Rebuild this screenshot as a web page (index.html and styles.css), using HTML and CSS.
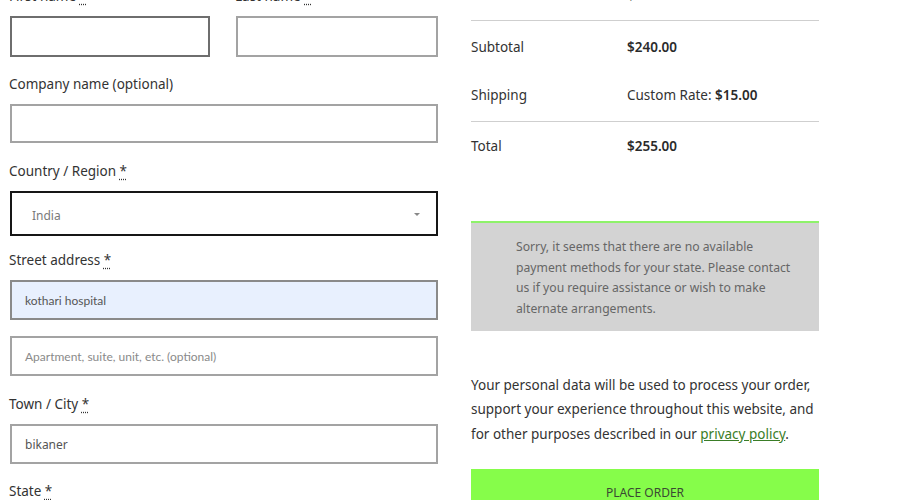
FILE: index.html
```html
<!DOCTYPE html>
<html lang="en">
<head>
<meta charset="utf-8">
<title>Checkout</title>
<link rel="stylesheet" href="styles.css">
</head>
<body>
<div class="page">
  <div class="billing">
    <div class="name-row">
      <div class="field">
        <label class="label">First name <abbr class="req">*</abbr></label>
        <div class="input input-dark"></div>
      </div>
      <div class="field">
        <label class="label">Last name <abbr class="req">*</abbr></label>
        <div class="input input-light"></div>
      </div>
    </div>
    <div class="field field-company">
      <label class="label">Company name (optional)</label>
      <div class="input input-light input-short"></div>
    </div>
    <div class="field field-country">
      <label class="label">Country / Region <abbr class="req">*</abbr></label>
      <div class="select">
        <span class="select-value">India</span>
        <span class="caret"></span>
      </div>
    </div>
    <div class="field field-street">
      <label class="label">Street address <abbr class="req">*</abbr></label>
      <div class="input input-filled"><span class="round-text">kothari hospital</span></div>
    </div>
    <div class="field field-apt">
      <div class="input input-light"><span class="round-text placeholder">Apartment, suite, unit, etc. (optional)</span></div>
    </div>
    <div class="field">
      <label class="label">Town / City <abbr class="req">*</abbr></label>
      <div class="input input-light"><span class="value">bikaner</span></div>
    </div>
    <div class="field">
      <label class="label">State <abbr class="req">*</abbr></label>
    </div>
  </div>

  <div class="review">
    <table class="totals">
      <tr class="row-ruled">
        <td class="cell-label">Product × 1</td>
        <td class="cell-value"><strong>$240.00</strong></td>
      </tr>
      <tr class="row-subtotal">
        <td class="cell-label">Subtotal</td>
        <td class="cell-value"><strong>$240.00</strong></td>
      </tr>
      <tr class="row-ruled row-shipping">
        <td class="cell-label">Shipping</td>
        <td class="cell-value">Custom Rate: <strong>$15.00</strong></td>
      </tr>
      <tr>
        <td class="cell-label">Total</td>
        <td class="cell-value"><strong>$255.00</strong></td>
      </tr>
    </table>

    <div class="notice">Sorry, it seems that there are no available payment methods for your state. Please contact us if you require assistance or wish to make alternate arrangements.</div>

    <p class="privacy">Your personal data will be used to process your order, support your experience throughout this website, and for other purposes described in our <a class="privacy-link" href="#">privacy policy</a>.</p>

    <button class="place-order" type="button">PLACE ORDER</button>
  </div>
</div>
</body>
</html>
```

FILE: styles.css
```css
* { box-sizing: border-box; }

html, body {
  margin: 0;
  padding: 0;
  background: #ffffff;
  overflow: hidden;
}

body {
  font-family: "Noto Sans", "Open Sans", sans-serif;
  color: #333333;
  font-size: 14px;
}

.page {
  display: grid;
  grid-template-columns: 428px 348px;
  column-gap: 33px;
  padding-left: 10px;
  margin-top: -30px;
  align-items: start;
}

/* ---------- left column ---------- */
.billing {
  padding-top: 16px;
}

.name-row {
  display: grid;
  grid-template-columns: 200px 202px;
  column-gap: 26px;
}

.field {
  margin-bottom: 17px;
}

.field-company { margin-bottom: 18px; }
.field-country { margin-bottom: 14px; }
.field-street { margin-bottom: 16px; }
.field-apt { margin-bottom: 18px; }

.label {
  display: block;
  height: 20px;
  line-height: 20px;
  margin-bottom: 10px;
  margin-left: -1px;
  font-size: 13.5px;
  color: #333333;
}

.req {
  text-decoration: underline dotted;
  text-underline-offset: 3px;
  border: none;
  color: #333333;
}

.input {
  height: 40px;
  border: 2px solid #9b9b9b;
  background: #ffffff;
  display: flex;
  align-items: center;
  padding-left: 13px;
}

.name-row .input { height: 41px; }

.input-dark { border-color: #6e6e6e; }
.input-light { border-color: #a3a3a3; }
.input-short { height: 39px; }

.input-filled {
  background: #e8f0fe;
  border-color: #8a8a8a;
}

.round-text {
  font-family: "Lato", "Noto Sans", sans-serif;
  font-size: 12px;
  color: #555555;
}

.placeholder { color: #8a8a8a; }

.value {
  font-size: 12px;
  color: #555555;
}

.select {
  height: 45px;
  border: 2px solid #161616;
  display: flex;
  align-items: center;
  justify-content: space-between;
  padding: 4px 16px 0 20px;
}

.select-value {
  font-size: 12px;
  color: #7a7a7a;
}

.caret {
  width: 0;
  height: 0;
  margin-top: -3px;
  border-left: 3px solid transparent;
  border-right: 3px solid transparent;
  border-top: 3px solid #888888;
}

/* ---------- right column ---------- */
.review {
  display: flex;
  flex-direction: column;
}

.totals {
  width: 100%;
  border-collapse: collapse;
}

.totals td {
  height: 50px;
  padding: 0;
  vertical-align: middle;
  font-size: 13.5px;
  color: #333333;
}

.row-subtotal td { padding-top: 3px; }
.row-shipping td { height: 51px; }

.row-ruled td { border-bottom: 1px solid #cfcfcf; }

.cell-label { width: 156px; }

.cell-value strong {
  font-weight: 600;
  color: #2a2a2a;
}

.notice {
  margin-top: 50px;
  background: #d3d3d3;
  border-top: 2px solid #8ef26a;
  padding: 14px 20px 11px 45px;
  font-size: 12.2px;
  line-height: 20.7px;
  color: #666666;
}

.privacy {
  margin: 42px 0 0;
  font-size: 13.5px;
  line-height: 24.5px;
  color: #333333;
}

.privacy-link {
  color: #3a7d27;
  text-decoration: underline;
}

.place-order {
  margin-top: 23px;
  height: 46px;
  border: none;
  background: #86fd4a;
  font-family: "Noto Sans", "Open Sans", sans-serif;
  font-size: 12px;
  color: #3b4a33;
  padding: 0;
  align-self: stretch;
}
```
